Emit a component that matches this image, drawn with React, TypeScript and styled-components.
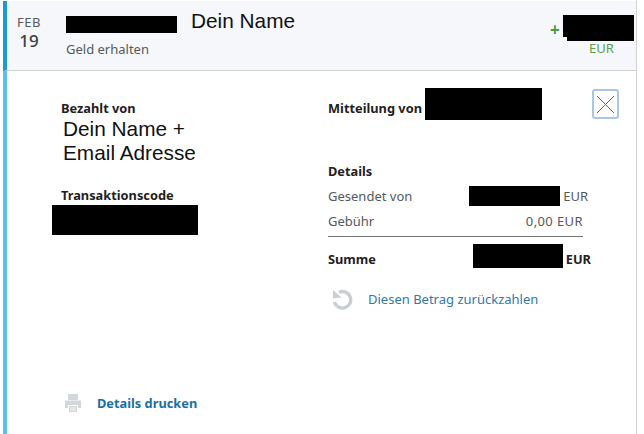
import styled, { createGlobalStyle } from 'styled-components';

const GlobalStyle = createGlobalStyle`
  html, body {
    margin: 0;
    padding: 0;
    background: #fff;
  }
  body {
    font-family: "Noto Sans", "Open Sans", sans-serif;
    color: #2c2e2f;
  }
`

const Card = styled.div`
  width: 634px;
  height: 434px;
  margin-left: 3px;
  padding-top: 1px;
  box-sizing: border-box;
  display: flex;
  flex-direction: column;
  border-right: 1px solid #d4d4d4;
`

const Header = styled.div`
  height: 70px;
  flex: none;
  box-sizing: border-box;
  display: flex;
  background: #f5f7fa;
  border-left: 4px solid #1c9ad2;
  border-bottom: 1px solid #cfd1d3;
`

const DateCol = styled.div`
  width: 34px;
  margin-left: 5px;
  margin-right: 20px;
  padding-top: 13px;
  color: #55595c;
  text-align: center;
`

const Month = styled.div`
  font-size: 13px;
  line-height: 16px;
  letter-spacing: 0.5px;
`

const Day = styled.div`
  margin-top: 1px;
  font-size: 17px;
  line-height: 20px;
  font-weight: 500;
  color: #3c4043;
`

const NameCol = styled.div`
  flex: 1;
  padding-top: 8px;
`

const NameRow = styled.div`
  display: flex;
  align-items: flex-start;
  gap: 14px;
`

const Redact = styled.div<{ $w: number; $h: number }>`
  width: ${p => p.$w}px;
  height: ${p => p.$h}px;
  background: #000;
  flex: none;
`

const HeaderRedact = styled(Redact)`
  margin-top: 7px;
`

const Handwritten = styled.div`
  font-family: "Liberation Sans", Arial, sans-serif;
  font-size: 20.8px;
  line-height: 24px;
  color: #111;
`

const Status = styled.div`
  margin-top: 8px;
  font-size: 13px;
  line-height: 16px;
  color: #55595c;
`

const AmountCol = styled.div`
  width: 86px;
  padding-top: 14px;
  box-sizing: border-box;
  display: flex;
  flex-direction: column;
`

const AmountRow = styled.div`
  display: flex;
  color: #4d9a45;
  font-size: 17px;
  font-weight: 700;
  line-height: 26px;
`

const Plus = styled.span`
  width: 13px;
  padding-top: 2px;
`

const AmountBars = styled.div`
  display: flex;
  flex-direction: column;
  align-items: flex-end;
  width: 71px;
`

const Currency = styled.div`
  margin: -3px 0 0 39px;
  color: #5c9f52;
  font-size: 13px;
  line-height: 16px;
`

const Body = styled.div`
  flex: 1;
  position: relative;
  box-sizing: border-box;
  border-left: 4px solid #5cc1ea;
  padding-left: 54px;
  display: flex;
  flex-direction: column;
  justify-content: space-between;
  padding-bottom: 21px;
`

const Columns = styled.div`
  display: flex;
`

const LeftCol = styled.div`
  width: 267px;
  flex: none;
  padding-top: 29px;
`

const RightCol = styled.div`
  width: 263px;
  flex: none;
  padding-top: 17px;
`

const Label = styled.div`
  font-size: 12.8px;
  line-height: 16px;
  font-weight: 700;
  color: #1f2122;
`

const PayerName = styled(Handwritten)`
  margin-left: 2px;
  margin-top: 1px;
`

const CodeLabel = styled(Label)`
  margin-top: 22px;
`

const CodeRedact = styled(Redact)`
  margin-left: -9px;
  margin-top: 2px;
`

const MessageRow = styled.div`
  display: flex;
  align-items: flex-start;
  gap: 3px;
`

const MessageLabel = styled(Label)`
  margin-top: 12px;
`

const DetailsLabel = styled(Label)`
  margin-top: 43px;
`

const Row = styled.div<{ $top: number }>`
  display: flex;
  align-items: center;
  justify-content: space-between;
  margin-top: ${p => p.$top}px;
  font-size: 13px;
  color: #55595c;
`

const SentRow = styled(Row)`
  width: 260px;
`

const RowEnd = styled.div`
  display: flex;
  align-items: center;
  gap: 3px;
`

const FeeRow = styled(Row)`
  width: 255px;
  line-height: 16px;
`

const FeeAmount = styled.span`
  letter-spacing: 0.4px;
`

const Rule = styled.div`
  width: 255px;
  height: 1px;
  background: #777;
  margin-top: 7px;
`

const SumRow = styled(Row)`
  align-items: flex-end;
  color: #1f2122;
  font-weight: 700;
  font-size: 12.8px;
  line-height: 18px;
`

const SumEnd = styled(RowEnd)`
  align-items: flex-end;
`

const RefundRow = styled.div`
  display: flex;
  align-items: center;
  margin-top: 19px;
  padding-left: 4px;
  gap: 15px;
  color: #2f7aa8;
  font-size: 13px;
  line-height: 24px;
`

const CloseButton = styled.button`
  position: absolute;
  top: 18px;
  left: 585px;
  width: 27px;
  height: 30px;
  padding: 0;
  box-sizing: border-box;
  background: #fff;
  border: 2px solid #a9c6e6;
  border-radius: 3px;
  display: flex;
  align-items: center;
  justify-content: center;
`

const PrintRow = styled.div`
  display: flex;
  align-items: center;
  margin-left: 4px;
  gap: 16px;
  color: #1b6ea5;
  font-size: 12.8px;
  font-weight: 700;
  line-height: 20px;
`

const PrinterIcon = () => (
  <svg width="16" height="18" viewBox="0 0 16 18">
    <path d="M3 0h10v6H3z M0 6.5h16V14h-3v-3H3v3H0z" fill="#d3d7da" />
    <path d="M4 12h8v6H4z" fill="#d3d7da" />
    <path d="M5 14h6M5 16h6" stroke="#fff" strokeWidth="0.8" />
  </svg>
)

const RefundIcon = () => (
  <svg width="21" height="21" viewBox="0 0 21 21">
    <path d="M7 3.2 A8.3 8.3 0 1 1 2.4 13" stroke="#c9ced2" strokeWidth="3.4" fill="none" />
    <path d="M1 1 L1 9.5 L9.5 8.5 Z" fill="#c9ced2" />
  </svg>
)

const App = () => {
  return (
    <>
      <GlobalStyle />
      <Card>
        <Header>
          <DateCol>
            <Month>FEB</Month>
            <Day>19</Day>
          </DateCol>
          <NameCol>
            <NameRow>
              <HeaderRedact $w={111} $h={17} />
              <Handwritten>Dein Name</Handwritten>
            </NameRow>
            <Status>Geld erhalten</Status>
          </NameCol>
          <AmountCol>
            <AmountRow>
              <Plus>+</Plus>
              <AmountBars>
                <Redact $w={71} $h={22} />
                <Redact $w={67} $h={4} />
              </AmountBars>
            </AmountRow>
            <Currency>EUR</Currency>
          </AmountCol>
        </Header>
        <Body>
          <Columns>
            <LeftCol>
              <Label>Bezahlt von</Label>
              <PayerName>
                Dein Name +
                <br />
                Email Adresse
              </PayerName>
              <CodeLabel>Transaktionscode</CodeLabel>
              <CodeRedact $w={146} $h={30} />
            </LeftCol>
            <RightCol>
              <MessageRow>
                <MessageLabel>Mitteilung von</MessageLabel>
                <Redact $w={117} $h={32} />
              </MessageRow>
              <DetailsLabel>Details</DetailsLabel>
              <SentRow $top={7}>
                Gesendet von
                <RowEnd>
                  <Redact $w={91} $h={20} />
                  EUR
                </RowEnd>
              </SentRow>
              <FeeRow $top={7}>
                Gebühr
                <FeeAmount>0,00 EUR</FeeAmount>
              </FeeRow>
              <Rule />
              <SumRow $top={7}>
                Summe
                <SumEnd>
                  <Redact $w={90} $h={24} />
                  EUR
                </SumEnd>
              </SumRow>
              <RefundRow>
                <RefundIcon />
                Diesen Betrag zurückzahlen
              </RefundRow>
            </RightCol>
          </Columns>
          <CloseButton aria-label="Schließen">
            <svg width="21" height="21" viewBox="0 0 21 21">
              <path d="M2 2l17 17M19 2L2 19" stroke="#666" strokeWidth="1" fill="none" />
            </svg>
          </CloseButton>
          <PrintRow>
            <PrinterIcon />
            Details drucken
          </PrintRow>
        </Body>
      </Card>
    </>
  );
};

export default App;
